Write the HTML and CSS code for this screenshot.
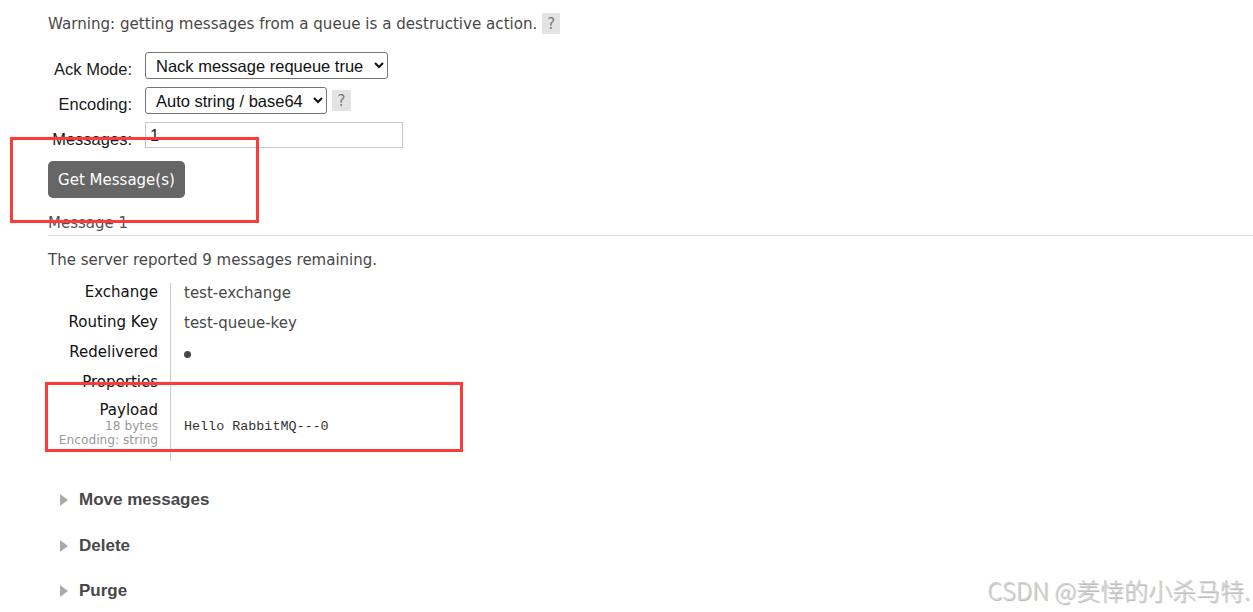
FILE: index.html
```html
<!DOCTYPE html>
<html lang="en">
<head>
<meta charset="utf-8">
<title>Get messages</title>
<link rel="stylesheet" href="styles.css">
</head>
<body>
<div class="page">
  <div class="warning">
    <span>Warning: getting messages from a queue is a destructive action.</span>
    <span class="help">?</span>
  </div>

  <div class="form">
    <label class="form-label">Ack Mode:</label>
    <div class="form-field">
      <select class="select select-ack">
        <option>Nack message requeue true</option>
      </select>
    </div>
    <label class="form-label">Encoding:</label>
    <div class="form-field">
      <select class="select select-enc">
        <option>Auto string / base64</option>
      </select>
      <span class="help help-field">?</span>
    </div>
    <label class="form-label">Messages:</label>
    <div class="form-field">
      <input class="text-input" type="text" value="1">
    </div>
  </div>

  <button class="btn" type="button">Get Message(s)</button>

  <div class="msg-title">Message 1</div>
  <p class="remaining">The server reported 9 messages remaining.</p>

  <div class="details">
    <div class="d-th">Exchange</div>
    <div class="d-td">test-exchange</div>
    <div class="d-th">Routing Key</div>
    <div class="d-td">test-queue-key</div>
    <div class="d-th">Redelivered</div>
    <div class="d-td"><span class="dot"></span></div>
    <div class="d-th d-th-short">Properties</div>
    <div class="d-td"></div>
    <div class="d-th d-th-payload">
      <div>Payload</div>
      <div class="sub">18 bytes</div>
      <div class="sub">Encoding: string</div>
    </div>
    <div class="d-td d-td-payload"><pre class="payload">Hello RabbitMQ---0</pre></div>
  </div>

  <div class="sections">
    <div class="section"><span class="tri"></span>Move messages</div>
    <div class="section"><span class="tri"></span>Delete</div>
    <div class="section"><span class="tri"></span>Purge</div>
  </div>
</div>

<div class="mark mark-1"></div>
<div class="mark mark-2"></div>
<div class="watermark">CSDN @羑悻的小杀马特.</div>
</body>
</html>
```

FILE: styles.css
```css
html, body {
  margin: 0;
  padding: 0;
  background: #ffffff;
}

body {
  font-family: "DejaVu Sans", Verdana, sans-serif;
  font-size: 15px;
  color: #484848;
  position: relative;
  height: 612px;
  overflow: hidden;
}

.page {
  padding: 13px 0 0 48px;
}

.warning {
  display: flex;
  align-items: center;
  height: 21px;
  gap: 5px;
  font-size: 15.1px;
}

.help {
  display: inline-flex;
  align-items: center;
  justify-content: center;
  width: 18px;
  height: 21px;
  background: #e3e3e3;
  color: #7a7a7a;
  font-size: 15px;
}

.form {
  display: grid;
  grid-template-columns: 84px auto;
  column-gap: 13px;
  row-gap: 8px;
  margin-top: 18px;
  align-items: start;
}

.form-label {
  font-family: "Liberation Sans", Arial, sans-serif;
  font-size: 16.5px;
  color: #1a1a1a;
  text-align: right;
  line-height: 19px;
  padding-top: 8px;
  white-space: nowrap;
}

.form-field {
  display: flex;
  align-items: center;
  gap: 5px;
}

.select {
  font-family: "Liberation Sans", Arial, sans-serif;
  font-size: 16.5px;
  color: #111;
  height: 27px;
  border: 1px solid #767676;
  border-radius: 3px;
  background: #fff;
  padding: 0 2px 0 6px;
  margin: 0;
}

.select-ack { width: 243px; }
.select-enc { width: 182px; }

.help-field {
  width: 19px;
}

.text-input {
  box-sizing: border-box;
  width: 258px;
  height: 26px;
  border: 1px solid #c8c8c8;
  padding: 0 4px;
  margin: 0;
  font-family: "Liberation Sans", Arial, sans-serif;
  font-size: 16.5px;
  color: #222;
  outline: none;
}

.btn {
  display: block;
  margin-top: 12px;
  width: 137px;
  height: 37px;
  border: none;
  border-radius: 5px;
  background: #666666;
  color: #ffffff;
  font-family: "DejaVu Sans", Verdana, sans-serif;
  font-size: 15px;
  padding: 0;
}

.msg-title {
  margin-top: 16px;
  line-height: 18px;
  padding-bottom: 3px;
  border-bottom: 1px solid #dddddd;
  color: #555;
}

.remaining {
  margin: 15px 0 0;
  line-height: 18px;
}

.details {
  display: grid;
  grid-template-columns: 123px auto;
  margin-top: 14px;
}

.d-th {
  box-sizing: border-box;
  text-align: right;
  padding: 0 12px 12px 0;
  border-right: 1px solid #cccccc;
  line-height: 18px;
  color: #111;
  white-space: nowrap;
}

.d-th-short {
  padding-bottom: 10px;
}

.d-th-payload {
  padding-bottom: 14px;
}

.d-th-payload .sub {
  font-size: 12.2px;
  line-height: 14px;
  color: #999999;
}

.d-td {
  padding: 1px 0 0 13px;
  line-height: 18px;
}

.dot {
  display: inline-block;
  width: 7px;
  height: 7px;
  border-radius: 50%;
  background: #484848;
  margin-top: 7px;
  vertical-align: top;
}

.d-td-payload {
  padding-top: 17px;
}

.payload {
  margin: 0;
  font-family: "Liberation Mono", "Courier New", monospace;
  font-size: 13.4px;
  line-height: 18px;
  color: #333;
}

.sections {
  margin-top: 29px;
  display: flex;
  flex-direction: column;
  gap: 25.5px;
}

.section {
  display: flex;
  align-items: center;
  height: 20px;
  padding-left: 12px;
  font-family: "Liberation Sans", Tahoma, sans-serif;
  font-weight: bold;
  font-size: 17px;
  color: #484848;
}

.tri {
  width: 0;
  height: 0;
  border-left: 8px solid #aaaaaa;
  border-top: 6.5px solid transparent;
  border-bottom: 6.5px solid transparent;
  margin-right: 11px;
}

.mark {
  position: absolute;
  box-sizing: border-box;
  border: 3px solid #fe3a3a;
  pointer-events: none;
}

.mark-1 {
  left: 10px;
  top: 137px;
  width: 249px;
  height: 86px;
}

.mark-2 {
  left: 45px;
  top: 382px;
  width: 418px;
  height: 70px;
}

.watermark {
  position: absolute;
  right: 3px;
  top: 575px;
  font-family: "Noto Sans CJK SC", sans-serif;
  font-weight: 300;
  font-size: 24px;
  line-height: 30px;
  color: #d2d2d2;
  text-shadow: 1px 1px 1px #b0b0b0;
  white-space: nowrap;
}
```
